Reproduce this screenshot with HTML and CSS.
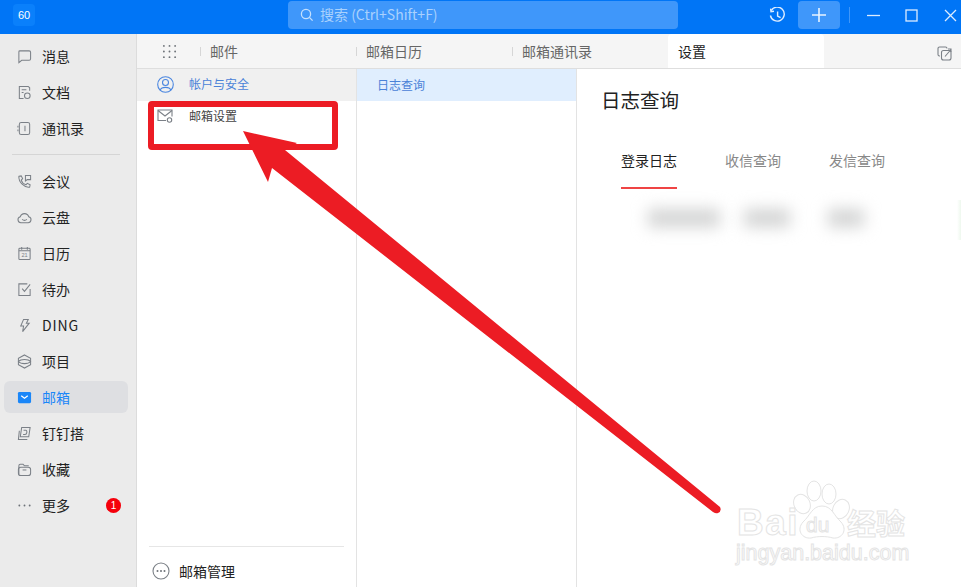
FILE: index.html
```html
<!DOCTYPE html>
<html>
    <head>
        <title>邮箱设置</title>
        <meta charset="utf-8">
        <link rel="stylesheet" href="styles.css">
    </head>

    <body>
        <div class="app">
            <header class="topbar">
                <div class="logo">60</div>
                <div class="search">
                    <svg class="search-icon" viewBox="0 0 14 14"><circle cx="6" cy="6" r="4.6"/><path d="M9.4 9.4 12.6 12.6"/></svg>
                    <span>搜索 (Ctrl+Shift+F)</span>
                </div>
                <svg class="history" viewBox="0 0 17 17"><path d="M2.2 3.6A7 7 0 1 1 1.4 8.5"/><path d="M1.6 1.6 2 4.6 5 4.2"/><path d="M8.6 4.6V9l3 1.6"/></svg>
                <div class="plus"><svg viewBox="0 0 16 16"><path d="M8 1V15M1 8H15"/></svg></div>
                <div class="topbar-sep"></div>
                <svg class="win win-min" viewBox="0 0 13 13"><path d="M0 6.5H13"/></svg>
                <svg class="win win-max" viewBox="0 0 13 13"><rect x="1" y="1" width="11" height="11"/></svg>
                <svg class="win win-close" viewBox="0 0 13 13"><path d="M1 1 12 12M12 1 1 12"/></svg>
            </header>

            <div class="body">
                <aside class="sidebar">
                    <div class="side-item">
                        <svg viewBox="0 0 16 16"><path d="M3 2H13A1.5 1.5 0 0 1 14.5 3.5V10.500A1.500 1.500 0 0 1 13 12H5L2 14.500V3A1 1 0 0 1 3 2Z"/></svg>
                        <span>消息</span>
                    </div>
                    <div class="side-item">
                        <svg viewBox="0 0 16 16"><path d="M7 14.500H2.500V1.500H12L13.500 3V6"/><path d="M5 5H10M5 8H7"/><circle cx="11" cy="11.500" r="3"/></svg>
                        <span>文档</span>
                    </div>
                    <div class="side-item">
                        <svg viewBox="0 0 16 16"><rect x="2.500" y="1.500" width="11" height="13" rx="2"/><path d="M8.500 5V11M1 5V7M1 9V11"/></svg>
                        <span>通讯录</span>
                    </div>
                    <div class="side-sep"></div>
                    <div class="side-item">
                        <svg viewBox="0 0 16 16"><path d="M2 2.500 4.500 2 6 5 4.500 6.500C5 8.500 7 10.500 9.500 11.500L11 10 14 11.500 13.500 14C8 15 1.500 8.500 2 2.500Z"/><path d="M9 1.500H14.500V6H11L9 7.500Z"/></svg>
                        <span>会议</span>
                    </div>
                    <div class="side-item">
                        <svg viewBox="0 0 16 16"><path d="M4.500 13.500A3.200 3.200 0 0 1 3.500 7.200 4.700 4.700 0 0 1 12.500 7.200 3.200 3.200 0 0 1 11.500 13.500Z"/><path d="M5.500 10C7 11.300 9 11.300 10.500 10"/></svg>
                        <span>云盘</span>
                    </div>
                    <div class="side-item">
                        <svg viewBox="0 0 16 16"><rect x="2" y="2.500" width="12" height="12" rx="1"/><path d="M5 1V4M11 1V4M2 5H14"/><text class="cal-day" x="8" y="12">21</text></svg>
                        <span>日历</span>
                    </div>
                    <div class="side-item">
                        <svg viewBox="0 0 16 16"><path d="M14 7.500V14.500H2V2H11"/><path d="M5.500 7 8 10 14 2.500"/></svg>
                        <span>待办</span>
                    </div>
                    <div class="side-item">
                        <svg viewBox="0 0 16 16"><path d="M7 1.500H12L10 5.500H13L6 14.500 7 8.500H4Z"/></svg>
                        <span class="side-latin">DING</span>
                    </div>
                    <div class="side-item">
                        <svg viewBox="0 0 16 16"><path d="M8 1 14.500 4.700V11.300L8 15 1.500 11.300V4.700Z"/><path d="M1.500 8C4 5 12 5 14.500 8 12 11 4 11 1.500 8Z"/></svg>
                        <span>项目</span>
                    </div>
                    <div class="side-item side-item-active">
                        <svg viewBox="0 0 16 16"><rect class="mail-fill" x="1" y="2" width="14" height="12" rx="1.500"/><path class="mail-flap" d="M4.500 6.200 8 8.800 11.500 6.200"/></svg>
                        <span>邮箱</span>
                    </div>
                    <div class="side-item">
                        <svg viewBox="0 0 16 16"><path d="M5 1.500H14L12.500 11.500H3.500Z"/><path d="M2.500 5 1.500 14.500H11"/><path d="M7 4.500H9.500C11 4.500 11 9 8.500 9H6.500"/></svg>
                        <span>钉钉搭</span>
                    </div>
                    <div class="side-item">
                        <svg viewBox="0 0 16 16"><path d="M2 13V4A1.500 1.500 0 0 1 3.500 2.500H6.500L8 4H12.500"/><rect x="1.500" y="5.500" width="13" height="9" rx="2.500"/><path d="M6 8.500H10"/></svg>
                        <span>收藏</span>
                    </div>
                    <div class="side-item">
                        <svg viewBox="0 0 16 16"><circle class="dot" cx="2.500" cy="8" r="1"/><circle class="dot" cx="8" cy="8" r="1"/><circle class="dot" cx="13.500" cy="8" r="1"/></svg>
                        <span>更多</span>
                        <b class="badge">1</b>
                    </div>
                </aside>

                <div class="main">
                    <nav class="tabs">
                        <div class="apps">
                            <svg viewBox="0 0 16 16"><g class="dot"><circle cx="2" cy="2" r="1"/><circle cx="8" cy="2" r="1"/><circle cx="14" cy="2" r="1"/><circle cx="2" cy="8" r="1"/><circle cx="8" cy="8" r="1"/><circle cx="14" cy="8" r="1"/><circle cx="2" cy="14" r="1"/><circle cx="8" cy="14" r="1"/><circle cx="14" cy="14" r="1"/></g></svg>
                        </div>
                        <div class="tab">邮件</div>
                        <div class="tab">邮箱日历</div>
                        <div class="tab">邮箱通讯录</div>
                        <div class="tab tab-active">设置</div>
                        <svg class="popout" viewBox="0 0 15 15"><rect x="4.500" y="4.500" width="9.500" height="9.500" rx="2"/><path d="M3 10H2.500A1.500 1.500 0 0 1 1 8.500V2.500A1.500 1.500 0 0 1 2.500 1H8.500A1.500 1.500 0 0 1 10 2.500"/><path d="M8 10.500 14 3.500M11 3H14V6"/></svg>
                    </nav>

                    <div class="panes">
                        <section class="nav-pane">
                            <div class="nav-row nav-row-active">
                                <svg viewBox="0 0 17 17"><circle cx="8.500" cy="8.500" r="7.800"/><circle cx="8.500" cy="6.500" r="3"/><path d="M3.200 14C4.500 10.500 12.500 10.500 13.800 14"/></svg>
                                <span>帐户与安全</span>
                            </div>
                            <div class="nav-row">
                                <svg viewBox="0 0 17 17"><path d="M9 12.500H1V2H15V8.500"/><path d="M1 2.500 8 8 15 2.500"/><circle cx="12.500" cy="12" r="2.200"/></svg>
                                <span>邮箱设置</span>
                            </div>
                            <div class="nav-foot">
                                <svg viewBox="0 0 18 18"><circle cx="9" cy="9" r="8"/><circle class="dot" cx="5.500" cy="9" r="1"/><circle class="dot" cx="9" cy="9" r="1"/><circle class="dot" cx="12.500" cy="9" r="1"/></svg>
                                <span>邮箱管理</span>
                            </div>
                        </section>

                        <section class="list-pane">
                            <div class="list-row">日志查询</div>
                        </section>

                        <section class="content">
                            <h1>日志查询</h1>
                            <div class="log-tabs">
                                <div class="log-tab log-tab-active">登录日志</div>
                                <div class="log-tab">收信查询</div>
                                <div class="log-tab">发信查询</div>
                            </div>
                            <div class="blur-row">
                                <i class="blob blob-1"></i>
                                <i class="blob blob-2"></i>
                                <i class="blob blob-3"></i>
                            </div>
                        </section>
                    </div>
                </div>
            </div>

            <!-- annotation drawn over the screenshot -->
            <svg class="overlay" viewBox="0 0 961 587">
                <rect class="mark-box" x="151" y="104" width="184" height="43" rx="1"/>
                <path class="mark-arrow" d="M243 131 297 143 285 150 720 507Q722 511 718 513 716 514 713 512L272 168 268 182Z"/>
                <g class="wm">
                    <ellipse cx="802" cy="504" rx="8" ry="10" transform="rotate(-25 802 504)"/>
                    <ellipse cx="814" cy="491" rx="7" ry="10"/>
                    <ellipse cx="829" cy="494" rx="7" ry="10"/>
                    <ellipse cx="841" cy="509" rx="8" ry="10" transform="rotate(25 841 509)"/>
                    <path d="M822 506C812 506 810 516 803 522 796 530 802 539 811 538 818 536 826 536 833 538 842 539 848 530 841 522 834 516 832 506 822 506Z"/>
                    <text class="wm-bai" x="737" y="535">Bai</text>
                    <text class="wm-du" x="806" y="532">du</text>
                    <text class="wm-cn" x="847" y="535">经验</text>
                    <text class="wm-url" x="736" y="560">jingyan.baidu.com</text>
                </g>
            </svg>
        </div>
    </body>
</html>
```

FILE: styles.css
```css
html, body {
    margin: 0;
    padding: 0;
}

body {
    color: #222;
    font-family: "Noto Sans CJK SC", "Liberation Sans", sans-serif;
    font-size: 14px;
}

.app {
    position: relative;
    width: 961px;
    height: 587px;
    overflow: hidden;
    background-color: #fff;
}

svg {
    fill: none;
    stroke: #7b8087;
    stroke-width: 1.1;
    flex: none;
}

.dot, .dot circle {
    fill: #6d7278;
    stroke: none;
}

/* top bar */
.topbar {
    display: flex;
    align-items: center;
    height: 34px;
    background-color: #0075f6;
    color: #fff;
}

.logo {
    width: 22px;
    height: 22px;
    margin-left: 13px;
    margin-top: -4px;
    border-radius: 4px;
    background-color: #0a80fb;
    font-family: "Liberation Sans", sans-serif;
    font-size: 11px;
    line-height: 22px;
    text-align: center;
}

.search {
    display: flex;
    align-items: center;
    width: 390px;
    height: 28px;
    margin-left: 253px;
    margin-top: -4px;
    border-radius: 4px;
    background-color: #3f97fa;
    color: #a9d1fd;
    font-size: 14px;
}

.search span {
    margin-bottom: 2px;
}

.search-icon {
    width: 14px;
    height: 14px;
    margin: 0 6px 0 12px;
    stroke: #c4e0fe;
    stroke-width: 1.300;
}

.history {
    width: 17px;
    height: 17px;
    margin-left: 91px;
    margin-top: -3px;
    stroke: #dcecff;
    stroke-width: 1.400;
}

.plus {
    display: flex;
    align-items: center;
    justify-content: center;
    width: 42px;
    height: 28px;
    margin-left: 12px;
    margin-top: -4px;
    border-radius: 4px;
    background-color: #3f97fa;
}

.plus svg {
    width: 16px;
    height: 16px;
    stroke: #e8f3ff;
    stroke-width: 1.600;
}

.topbar-sep {
    width: 1px;
    height: 16px;
    margin-left: 9px;
    margin-top: -4px;
    background-color: #3f97fa;
}

.win {
    width: 13px;
    height: 13px;
    margin-top: -3px;
    stroke: #dcecff;
    stroke-width: 1.300;
}

.win-min {
    margin-left: 17px;
}

.win-max {
    margin-left: 25px;
}

.win-close {
    margin-left: 26px;
}

/* left rail */
.body {
    display: flex;
    height: 553px;
}

.sidebar {
    width: 136px;
    padding-top: 4px;
    border-right: 1px solid #dcdcdc;
    background-color: #ebebeb;
    flex: none;
}

.side-item {
    display: flex;
    align-items: center;
    position: relative;
    height: 36px;
    padding-left: 17px;
}

.side-item svg {
    width: 15px;
    height: 15px;
    margin-right: 10px;
}

.side-latin {
    letter-spacing: 0.9px;
}

.side-item-active {
    height: 32px;
    margin: 2px 8px 2px 4px;
    padding-left: 13px;
    border-radius: 6px;
    background-color: #dedfe2;
    color: #1a86f8;
}

.mail-fill {
    fill: #1a86f8;
    stroke: none;
}

.mail-flap {
    stroke: #fff;
    stroke-width: 1.400;
}

.cal-day {
    fill: #7b8087;
    stroke: none;
    font-family: "Liberation Sans", sans-serif;
    font-size: 6px;
    text-anchor: middle;
}

.side-sep {
    height: 1px;
    margin: 8px 16px 8px 12px;
    background-color: #d5d5d5;
}

.badge {
    position: absolute;
    left: 106px;
    top: 11px;
    width: 15px;
    height: 15px;
    border-radius: 50%;
    background-color: #f5000b;
    color: #fff;
    font-family: "Liberation Sans", sans-serif;
    font-size: 10px;
    font-weight: normal;
    line-height: 15px;
    text-align: center;
}

/* tab strip */
.main {
    display: flex;
    flex-direction: column;
    flex: 1;
    min-width: 0;
}

.tabs {
    display: flex;
    align-items: stretch;
    height: 34px;
    border-bottom: 1px solid #dedede;
    background-color: #f5f5f5;
    flex: none;
}

.apps {
    display: flex;
    align-items: center;
    width: 63px;
    padding-left: 25px;
    box-sizing: border-box;
}

.apps svg {
    width: 15px;
    height: 15px;
}

.tab {
    position: relative;
    width: 156px;
    padding-left: 10px;
    box-sizing: border-box;
    color: #666;
    font-size: 14px;
    line-height: 35px;
}

.tab::before {
    content: "";
    position: absolute;
    left: 0;
    top: 13px;
    width: 1px;
    height: 9px;
    background-color: #d6d6d6;
}

.tab-active {
    border-radius: 4px 4px 0 0;
    background-color: #fff;
    color: #222;
}

.tab-active::before {
    display: none;
}

.popout {
    width: 15px;
    height: 15px;
    margin: 12px 0 0 113px;
}

/* panes */
.panes {
    display: flex;
    flex: 1;
    min-height: 0;
}

.nav-pane {
    display: flex;
    flex-direction: column;
    width: 219px;
    border-right: 1px solid #e3e3e3;
    flex: none;
}

.nav-row {
    display: flex;
    height: 32px;
    padding-left: 20px;
    color: #444;
    font-size: 12px;
    line-height: 30px;
}

.nav-row svg {
    width: 17px;
    height: 17px;
    margin: 7px 15px 0 0;
}

.nav-row-active {
    background-color: #f0f0f0;
    color: #4a82d8;
}

.nav-row-active svg {
    stroke: #4a86e0;
}

.nav-foot {
    display: flex;
    align-items: center;
    height: 41px;
    box-sizing: border-box;
    margin: auto 12px 0;
    padding: 8px 0 0 3px;
    border-top: 1px solid #e6e6e6;
    flex: none;
}

.nav-foot svg {
    width: 18px;
    height: 18px;
    margin-right: 9px;
}

.list-pane {
    width: 219px;
    border-right: 1px solid #e3e3e3;
    flex: none;
}

.list-row {
    height: 32px;
    padding-left: 20px;
    background-color: #e0eefe;
    color: #4a82d8;
    font-size: 12px;
    line-height: 31px;
}

.content {
    flex: 1;
    padding: 17px 0 0 25px;
    min-width: 0;
    background: linear-gradient(to left, #eef8ee, #fff 4px) no-repeat right 131px / 6px 40px;
}

.content h1 {
    margin: 0 0 0 -1px;
    color: #222;
    font-size: 19.500px;
    font-weight: normal;
    line-height: 28px;
}

.log-tabs {
    display: flex;
    gap: 48px;
    margin: 34px 0 0 19px;
}

.log-tab {
    height: 39px;
    color: #888;
    font-size: 14px;
    line-height: 24px;
}

.log-tab-active {
    border-bottom: 2px solid #ef4444;
    color: #222;
}

.blur-row {
    position: relative;
    height: 40px;
    margin: 9px 0 0 0;
}

.blob {
    position: absolute;
    top: 11px;
    height: 18px;
    background-color: #d2d3d3;
    filter: blur(8px);
}

.blob-1 {
    left: 46px;
    width: 72px;
}

.blob-2 {
    left: 142px;
    width: 46px;
}

.blob-3 {
    left: 226px;
    width: 36px;
}

/* annotation overlay */
.overlay {
    position: absolute;
    left: 0;
    top: 0;
    width: 961px;
    height: 587px;
    stroke: none;
}

.mark-box {
    stroke: #ec1c24;
    stroke-width: 6;
}

.mark-arrow {
    fill: #ec1c24;
    stroke: none;
}

.wm {
    fill: #fff;
    stroke: #e4e4e4;
    stroke-width: 1;
    font-family: "Liberation Sans", sans-serif;
}

.wm-bai {
    font-size: 37px;
    font-weight: bold;
    letter-spacing: 1.500px;
}

.wm-du {
    font-size: 21px;
}

.wm-cn {
    font-family: "Noto Sans CJK SC", sans-serif;
    font-size: 29px;
    font-weight: bold;
}

.wm-url {
    font-size: 21.500px;
}
```
